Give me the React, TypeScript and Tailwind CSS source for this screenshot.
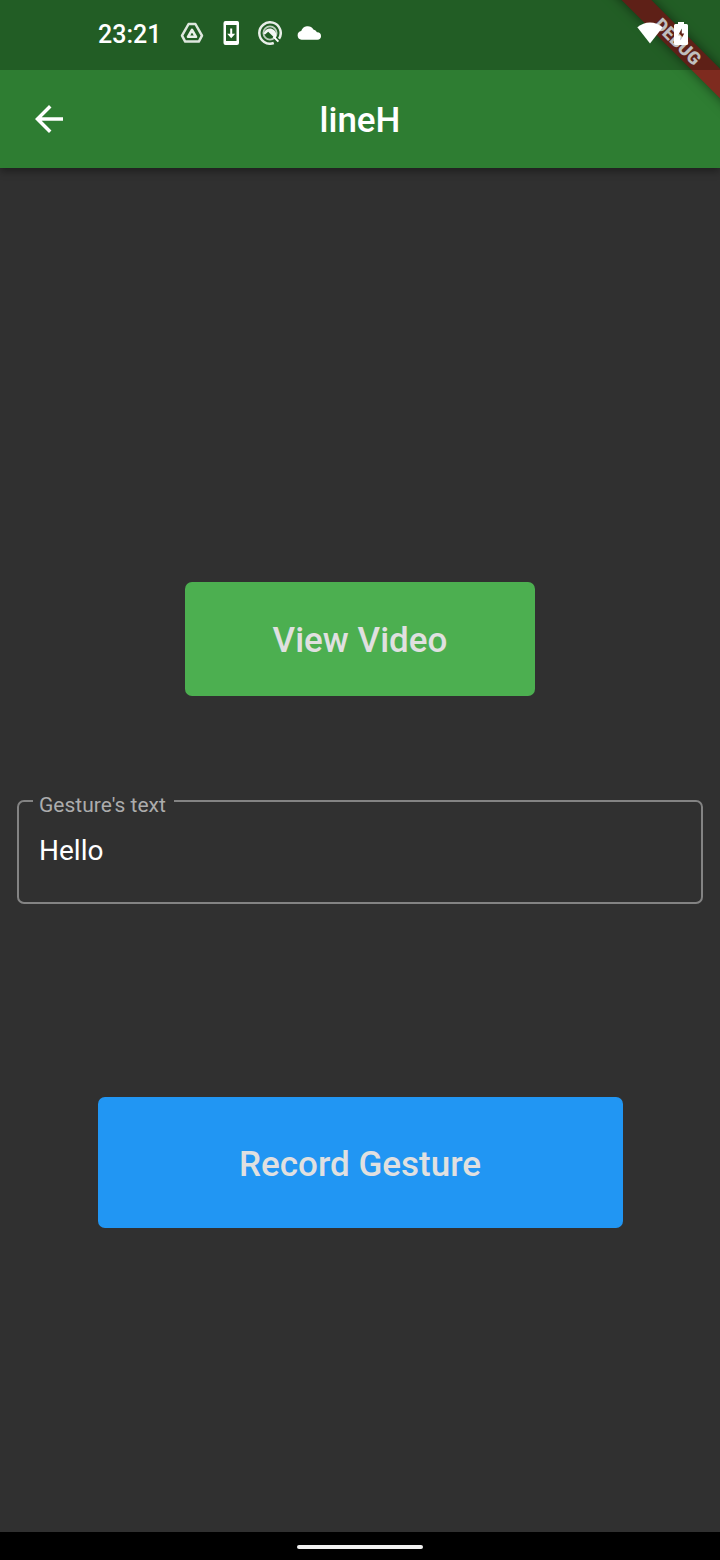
import { useState } from "react";
import { MdArrowBack } from "react-icons/md";

function DriveIcon() {
  return (
    <svg viewBox="0 0 24 24" className="h-6 w-6" fill="none" stroke="white" strokeLinejoin="round">
      <path d="M8.600 3h6.800l6.600 11.600-3.200 6H5.200l-3.200-6z" strokeWidth="2.500" opacity="0.85" />
      <path d="M12 8.800l4 7H8z" strokeWidth="2.600" opacity="0.9" />
    </svg>
  );
}

function SystemUpdateIcon() {
  return (
    <svg viewBox="0 0 24 24" className="h-6 w-6" fill="white">
      <path
        fillRule="evenodd"
        d="M6.500 0h11A2 2 0 0 1 20 2v20a2 2 0 0 1-2 2h-11.500a2 2 0 0 1-2-2V2a2 2 0 0 1 2-2zM7 4v16h10.500V4z"
      />
      <path d="M11.200 7.500h2v5.200h3L12.200 17.200l-4-4.500h3z" />
    </svg>
  );
}

function AndroidQIcon() {
  return (
    <svg viewBox="0 0 24 24" className="h-6 w-6" fill="none" stroke="white">
      <path d="M15.800 22A10.700 10.700 0 1 1 21 17.800" strokeWidth="2.500" opacity="0.9" />
      <circle cx="12" cy="12" r="6.600" strokeWidth="1.800" opacity="0.7" />
      <path d="M15.400 15.600l5 5" strokeWidth="2" />
      <path
        d="M5.600 12.400C7 7.600 12.600 5.800 16 9c2.600 2.400 2.800 6 1.200 8.600l-7-6.800-3.200 2.600z"
        fill="white"
        stroke="none"
        opacity="0.95"
      />
    </svg>
  );
}

function CloudIcon() {
  return (
    <svg viewBox="0 0 24 24" className="h-6 w-6" fill="white">
      <path d="M4.600 18.800a4.400 4.400 0 0 1-.4-8.700A6.800 6.800 0 0 1 16.400 8.400a5 5 0 0 1 3.600 2.800A3.800 3.800 0 0 1 20.400 18.800z" />
    </svg>
  );
}

function WifiIcon() {
  return (
    <svg viewBox="0 0 26 24" className="h-6 w-[26px]" fill="white">
      <path d="M13 22.500L.3 6.200C4.200 3.100 8.400 1.400 13 1.400s8.800 1.700 12.700 4.800z" />
    </svg>
  );
}

function BatteryChargingIcon() {
  return (
    <svg viewBox="0 0 14 24" className="h-6 w-[14px]" fill="white">
      <path
        fillRule="evenodd"
        d="M4 1h6v2h2.500A1.500 1.500 0 0 1 14 4.500v18a1.500 1.500 0 0 1-1.500 1.500h-11A1.500 1.500 0 0 1 0 22.500v-18A1.500 1.500 0 0 1 1.500 3H4zM7.800 7.500L4 14.600h2.600v5L10.200 12.400H7.800z"
      />
    </svg>
  );
}

function StatusBar() {
  return (
    <div className="relative z-20 flex h-[70px] items-center justify-between bg-black/25 pr-8 pb-1 pl-[98px]">
      <div className="flex items-center gap-[15px]">
        <time className="mr-1 pt-1 text-[25px] leading-7 font-medium">23:21</time>
        <DriveIcon />
        <SystemUpdateIcon />
        <AndroidQIcon />
        <CloudIcon />
      </div>
      <div className="flex items-center gap-[11px]">
        <WifiIcon />
        <BatteryChargingIcon />
      </div>
    </div>
  );
}

function DebugRibbon() {
  return (
    <div className="pointer-events-none absolute top-0 right-0 z-10 h-32 w-32 overflow-hidden">
      <div className="absolute top-[31px] -right-[58px] w-[200px] rotate-45 bg-[#7e2b1f] text-center text-[18px] leading-[21px] font-black shadow-[0_0_12px_rgba(0,0,0,0.5)]">
        DEBUG
      </div>
    </div>
  );
}

export default function App() {
  const [text, setText] = useState("Hello");

  return (
    <div className="flex min-h-screen flex-col bg-[#303030] font-[Roboto,sans-serif] text-white">
      <header className="relative bg-[#2e7d32] shadow-[0_3px_8px_rgba(0,0,0,0.4)]">
        <StatusBar />
        <DebugRibbon />
        <div className="grid h-[98px] grid-cols-[98px_1fr_98px] items-center">
          <button type="button" aria-label="Back" className="flex h-full items-center justify-center">
            <MdArrowBack size={42} />
          </button>
          <h1 className="pt-1 text-center text-[35px] leading-10 font-medium">lineH</h1>
        </div>
      </header>

      <main className="flex flex-1 flex-col items-center justify-center px-[17px] pt-[110px]">
        <button
          type="button"
          className="h-[114px] w-[350px] rounded-[7px] bg-[#4caf50] pt-1 text-[35px] leading-10 font-medium text-[#e0e0e0]"
        >
          View Video
        </button>

        <fieldset className="mt-[89px] w-full rounded-[7px] border-2 border-[#838383] px-[20px] pb-[33px]">
          <legend className="-ml-[6px] pt-2 pr-2 pl-[6px] text-[21px] leading-6 text-[#acacac]">
            <label htmlFor="gesture-text">Gesture's text</label>
          </legend>
          <input
            id="gesture-text"
            type="text"
            value={text}
            onChange={(event) => setText(event.target.value)}
            className="mt-4 block w-full bg-transparent text-[28px] leading-9 outline-none"
          />
        </fieldset>

        <button
          type="button"
          className="mt-[193px] h-[131px] w-[525px] rounded-[7px] bg-[#2196f3] pt-1 text-[35px] leading-10 font-medium text-[#e0e0e0]"
        >
          Record Gesture
        </button>
      </main>

      <footer className="flex h-7 items-center justify-center bg-black pt-[2px]">
        <div className="h-1 w-[126px] rounded-full bg-[#f1f1f1]" />
      </footer>
    </div>
  );
}
